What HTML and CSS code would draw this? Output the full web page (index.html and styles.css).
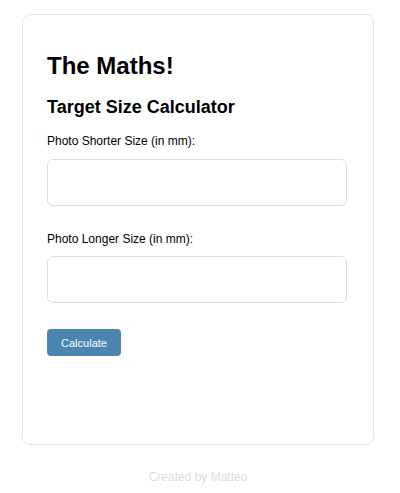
FILE: index.html
```html
<!DOCTYPE html>
<html lang="en">
<head>
<meta charset="utf-8">
<title>The Maths!</title>
<link rel="stylesheet" href="styles.css">
</head>
<body>
<div class="page">
  <main class="card">
    <h1 class="title">The Maths!</h1>
    <h2 class="subtitle">Target Size Calculator</h2>
    <form class="form">
      <label class="label" for="shorter">Photo Shorter Size (in mm):</label>
      <input class="field" id="shorter" type="number">
      <label class="label label-next" for="longer">Photo Longer Size (in mm):</label>
      <input class="field" id="longer" type="number">
      <button class="button" type="button">Calculate</button>
    </form>
  </main>
  <footer class="footer">Created by Matteo</footer>
</div>
</body>
</html>
```
FILE: styles.css
```css
html, body {
  margin: 0;
  background: #ffffff;
}

body {
  font-family: "Liberation Sans", Arial, sans-serif;
  color: #000;
}

.page {
  padding: 14px 26px 0 22px;
}

.card {
  border: 1px solid #e6e6e6;
  border-radius: 8px;
  padding: 0 26px 88px 24px;
}

.title {
  margin: 37px 0 0;
  font-size: 24px;
  line-height: 28px;
  font-weight: bold;
}

.subtitle {
  margin: 17px 0 0;
  font-size: 18px;
  line-height: 21px;
  font-weight: bold;
}

.form {
  display: flex;
  flex-direction: column;
  align-items: flex-start;
}

.label {
  display: block;
  margin: 16px 0 11px;
  font-size: 12px;
  line-height: 14px;
}

.label-next {
  margin-top: 26px;
  margin-bottom: 10px;
}

.field {
  display: block;
  width: 100%;
  height: 47px;
  box-sizing: border-box;
  border: 1px solid #dddddd;
  border-radius: 6px;
  background: #fff;
  margin: 0;
  padding: 0 10px;
  font-family: inherit;
  font-size: 14px;
  -moz-appearance: textfield;
}

.field::-webkit-outer-spin-button,
.field::-webkit-inner-spin-button {
  -webkit-appearance: none;
  margin: 0;
}

.button {
  margin-top: 26px;
  width: 74px;
  height: 27px;
  padding: 0;
  border: none;
  border-radius: 4px;
  background: #4a86b0;
  color: #ffffff;
  font-family: inherit;
  font-size: 11px;
}

.footer {
  margin-top: 25px;
  text-align: center;
  font-size: 12px;
  line-height: 14px;
  color: #dcdcdc;
}
```
